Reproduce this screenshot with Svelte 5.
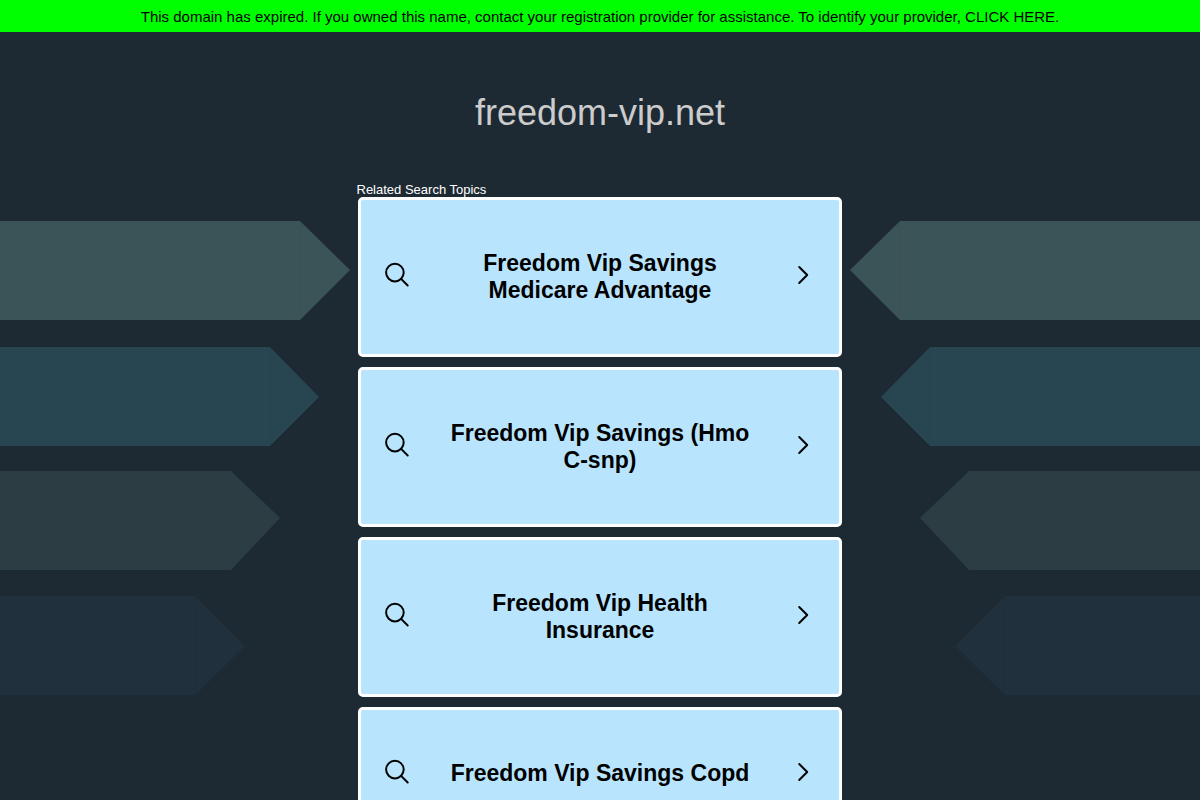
<script lang="ts">
	const domain = 'freedom-vip.net';

	const topics: string[] = [
		'Freedom Vip Savings Medicare Advantage',
		'Freedom Vip Savings (Hmo C-snp)',
		'Freedom Vip Health Insurance',
		'Freedom Vip Savings Copd'
	];

	// end = where the straight part stops, tip = the point of the arrow
	const arrows = [
		{ top: 221, end: 300, tip: 350, mid: 270, color: '#3b5457', seam: '#395054' },
		{ top: 347, end: 270, tip: 319, mid: 397, color: '#284552', seam: '#27424f' },
		{ top: 471, end: 231, tip: 280, mid: 518, color: '#2c3e44', seam: '#2c3e44' },
		{ top: 596, end: 195, tip: 245, mid: 646, color: '#20313d', seam: '#1f2f3a' }
	];
</script>

{#snippet arrowSet(side: string)}
	<svg class={`arrows ${side}`} width="350" height="700" viewBox="0 0 350 700" aria-hidden="true">
		{#each arrows as a}
			<path
				fill={a.color}
				d={`M0 ${a.top}H${a.end}L${a.tip} ${a.mid}L${a.end} ${a.top + 99}H0Z`}
			/>
			<path stroke={a.seam} stroke-width="1" d={`M${a.end + 0.5} ${a.top + 1}V${a.top + 98}`} />
		{/each}
	</svg>
{/snippet}

<div class="page">
	<a class="banner" href="#provider">
		This domain has expired. If you owned this name, contact your registration provider for
		assistance. To identify your provider, CLICK HERE.
	</a>

	{@render arrowSet('left')}
	{@render arrowSet('right')}

	<main>
		<h1>{domain}</h1>
		<section>
			<h2>Related Search Topics</h2>
			<ul>
				{#each topics as topic}
					<li>
						<a class="topic" href="#search">
							<svg class="icon" width="26" height="26" viewBox="0 0 26 26" aria-hidden="true">
								<circle cx="10.9" cy="10.6" r="8.8" />
								<path d="M17.1 16.9L23.7 23.5" />
							</svg>
							<span>{topic}</span>
							<svg class="icon" width="14" height="20" viewBox="0 0 14 20" aria-hidden="true">
								<path d="M2.2 2L10.2 10L2.2 18" />
							</svg>
						</a>
					</li>
				{/each}
			</ul>
		</section>
	</main>
</div>

<style>
	:global(body) {
		margin: 0;
		background: #1e2a33;
	}

	.page {
		position: relative;
		min-height: 100vh;
		font-family: "Liberation Sans", Arial, sans-serif;
	}

	.banner {
		display: block;
		padding: 8px 16px 7px;
		background: #00ff00;
		color: #000;
		font-size: 15px;
		line-height: 17px;
		text-align: center;
		text-decoration: none;
	}

	.arrows {
		position: absolute;
		top: 0;
		left: 0;
	}

	.arrows.right {
		left: auto;
		right: 0;
		transform: scaleX(-1);
	}

	main {
		position: relative;
		max-width: 487px;
		margin: 0 auto;
		padding: 60px 0 40px;
	}

	h1 {
		margin: 0 0 49px;
		color: #ccc;
		font-size: 36px;
		font-weight: normal;
		line-height: 41px;
		text-align: center;
	}

	h2 {
		margin: 0;
		color: #fff;
		font-size: 13px;
		font-weight: normal;
		line-height: 15px;
	}

	ul {
		display: flex;
		flex-direction: column;
		gap: 10px;
		max-width: 484px;
		margin: 0 auto;
		padding: 0;
		list-style: none;
	}

	.topic {
		display: flex;
		align-items: center;
		padding: 50px 28px 50px 23px;
		border: 3px solid #fff;
		border-radius: 5px;
		background: #b8e5fd;
		color: #000;
		font-size: 23px;
		font-weight: bold;
		line-height: 27px;
		text-align: center;
		text-decoration: none;
	}

	.topic span {
		flex: 1;
		padding: 0 39px 0 32px;
	}

	.icon {
		flex: none;
		margin: -2px 0 2px;
		fill: none;
		stroke: #000;
		stroke-width: 2;
		stroke-linecap: round;
		stroke-linejoin: round;
	}
</style>
